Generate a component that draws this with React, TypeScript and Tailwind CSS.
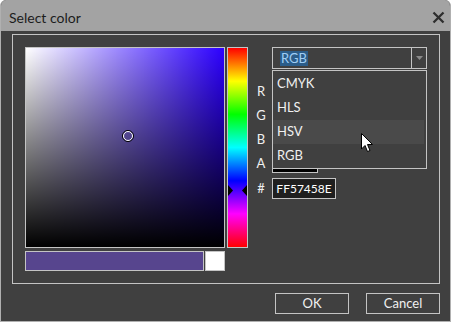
import React from 'react';

const font = { fontFamily: 'Lato, "Noto Sans", sans-serif' };

const modes = ['CMYK', 'HLS', 'HSV', 'RGB'];

const App: React.FC = () => {
  return (
    <div className="w-[452px] h-[323px] bg-white" style={font}>
      <div className="relative w-[451px] h-[322px] flex flex-col rounded-t-[6px] overflow-hidden border-x border-b border-[#b0b0b0] bg-[#404040]">
        {/* Title bar */}
        <div className="h-[31px] shrink-0 bg-[#a3a3a3] flex items-center justify-between pl-[8px] pr-[5px] pt-[3px]">
          <span className="text-[14px] text-[#1c1c1c]">Select color</span>
          <svg width="13" height="13" viewBox="0 0 13 13">
            <path d="M1.5 1.5 L11.5 11.5 M11.5 1.5 L1.5 11.5" stroke="#2e2e2e" strokeWidth="2.3" />
          </svg>
        </div>

        {/* Body */}
        <div className="flex-1 flex flex-col pl-[11px] pt-[3px]">
          <div className="w-[428px] h-[250px] border border-[#c4c4c4] pl-[12px] pt-[12px] flex">
            {/* SV square + preview */}
            <div className="flex flex-col">
              <div className="relative w-[200px] h-[201px] border border-[#c4c4c4] bg-[#2c00ff]">
                <div className="absolute inset-0 bg-gradient-to-r from-white to-transparent" />
                <div className="absolute inset-0 bg-gradient-to-b from-transparent to-black" />
                <div className="absolute left-[96px] top-[82px] w-[12px] h-[12px] rounded-full border-[1.5px] border-black">
                  <div className="w-full h-full rounded-full border-[1.5px] border-white" />
                </div>
              </div>
              <div className="flex gap-[1px] mt-[3px]">
                <div className="w-[179px] h-[20px] border border-[#c4c4c4] bg-[#57458e]" />
                <div className="w-[20px] h-[20px] border border-[#c4c4c4] bg-white" />
              </div>
            </div>

            {/* Hue bar */}
            <div
              className="relative ml-[2px] w-[21px] h-[201px] border border-[#c4c4c4]"
              style={{ background: 'linear-gradient(to bottom, #ff0000, #ffff00, #00ff00, #00ffff, #0000ff, #ff00ff, #ff0000)' }}
            >
              <svg className="absolute left-0 top-[137px]" width="19" height="11" viewBox="0 0 19 11">
                <path d="M0 0 L5 5.5 L0 11 Z" fill="#000" />
                <path d="M19 0 L14 5.5 L19 11 Z" fill="#000" />
              </svg>
            </div>

            {/* Labels */}
            <div className="w-[24px] pl-[2px] pt-[34px] flex flex-col items-center text-[13px] text-[#f0f0f0]">
              <div className="h-[24px] leading-[20px]">R</div>
              <div className="h-[24px] leading-[20px]">G</div>
              <div className="h-[24px] leading-[20px]">B</div>
              <div className="h-[25px] leading-[20px]">A</div>
              <div className="h-[21px] leading-[21px]">#</div>
            </div>

            {/* Inputs */}
            <div className="relative flex flex-col">
              <div className="w-[155px] h-[22px] border border-[#c4c4c4] flex items-center">
                <div className="flex-1 pl-[7px] flex items-center">
                  <span className="bg-[#2b5d8a] text-[#9fcdf5] text-[13px] leading-[15px] px-[1px]">RGB</span>
                </div>
                <div className="w-[15px] h-full border-l border-[#c4c4c4] flex items-center justify-center">
                  <svg width="7" height="4" viewBox="0 0 7 4"><path d="M0 0 L7 0 L3.5 4 Z" fill="#8a8a8a" /></svg>
                </div>
              </div>
              <div className="flex flex-col gap-[4px] mt-[12px]">
                {['r', 'g', 'b', 'a'].map((k) => (
                  <div key={k} className="w-[46px] h-[20px] border border-[#c4c4c4] bg-black" />
                ))}
              </div>
              <div className="mt-[5px] w-[64px] h-[21px] border border-[#c4c4c4] bg-[#1f1f1f] text-[12px] text-white flex items-center justify-center">
                FF57458E
              </div>

              {/* Dropdown list */}
              <div className="absolute left-0 top-[23px] w-[155px] h-[99px] border border-[#c4c4c4] bg-[#404040] pt-[1px]">
                {modes.map((m) => (
                  <div
                    key={m}
                    className={`h-[24px] pl-[4px] flex items-center text-[13px] text-[#f0f0f0] ${m === 'HSV' ? 'bg-[#4a4a4a] mr-[2px]' : ''}`}
                  >
                    {m}
                  </div>
                ))}
              </div>
            </div>
          </div>

          {/* Buttons */}
          <div className="flex justify-end gap-[17px] w-[428px] mt-[9px]">
            <button className="w-[74px] h-[21px] border border-[#c4c4c4] text-[13px] text-[#f0f0f0] leading-none">OK</button>
            <button className="w-[74px] h-[21px] border border-[#c4c4c4] text-[13px] text-[#f0f0f0] leading-none">Cancel</button>
          </div>
        </div>

        {/* Mouse cursor */}
        <svg className="absolute left-[360px] top-[133px]" width="13" height="20" viewBox="0 0 13 20">
          <path d="M0.5 0.5 L0.5 16 L4 12.5 L6.5 18.5 L9 17.5 L6.5 11.5 L11.5 11.5 Z" fill="#fff" stroke="#000" strokeWidth="1" strokeLinejoin="miter" />
        </svg>
      </div>
    </div>
  );
};

export default App;
